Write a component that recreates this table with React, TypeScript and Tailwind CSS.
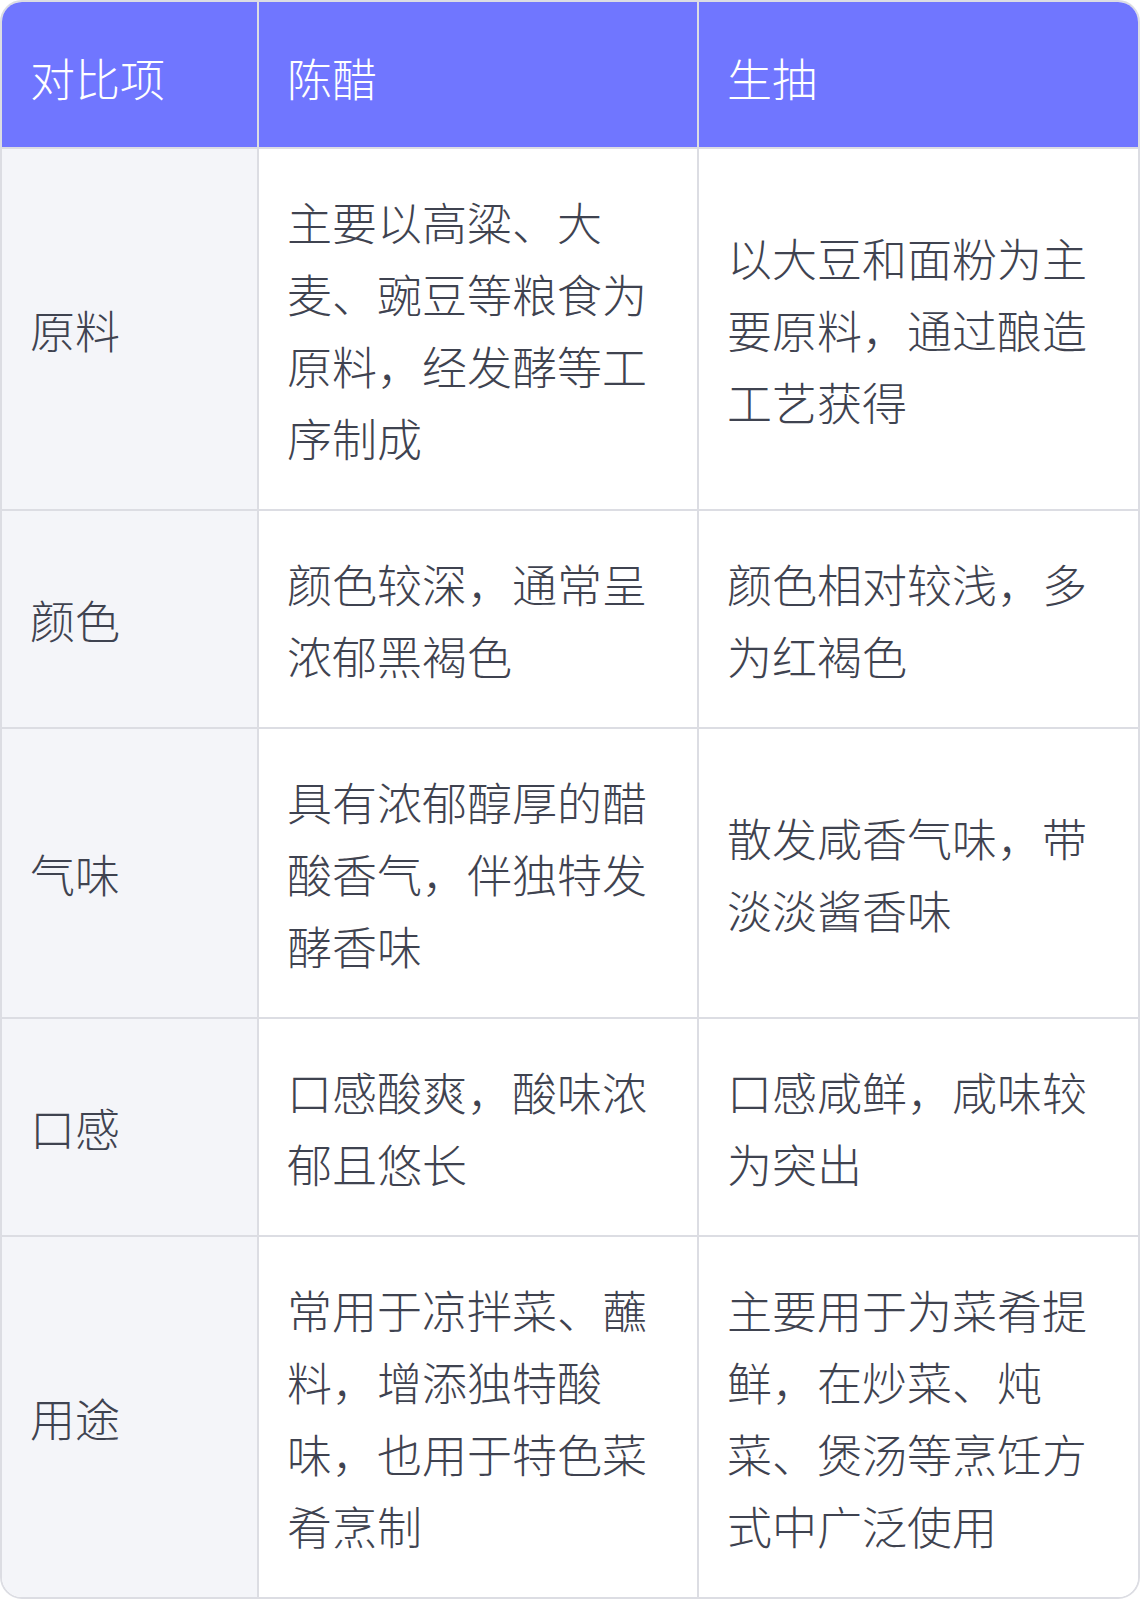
import React from 'react'

const rows = [
    ['原料', '主要以高粱、大麦、豌豆等粮食为原料，经发酵等工序制成', '以大豆和面粉为主要原料，通过酿造工艺获得'],
    ['颜色', '颜色较深，通常呈浓郁黑褐色', '颜色相对较浅，多为红褐色'],
    ['气味', '具有浓郁醇厚的醋酸香气，伴独特发酵香味', '散发咸香气味，带淡淡酱香味'],
    ['口感', '口感酸爽，酸味浓郁且悠长', '口感咸鲜，咸味较为突出'],
    ['用途', '常用于凉拌菜、蘸料，增添独特酸味，也用于特色菜肴烹制', '主要用于为菜肴提鲜，在炒菜、炖菜、煲汤等烹饪方式中广泛使用'],
]

function App() {
    return (
        <div className="w-[1140px] bg-white" style={{ fontFamily: '"Noto Sans CJK SC", "Noto Sans", sans-serif' }}>
            <div className="border-2 border-[#dcdde3] rounded-[22px] overflow-hidden">
                <div className="grid grid-cols-[257px_440px_1fr] text-[45px] leading-[72px] font-light">
                    {['对比项', '陈醋', '生抽'].map((h, i) => (
                        <div
                            key={h}
                            className={`bg-[#7076ff] text-white px-[28px] pt-[40px] pb-[33px] border-b-2 border-[#dcdde3] ${i < 2 ? 'border-r-2' : ''}`}
                        >
                            {h}
                        </div>
                    ))}
                    {rows.map((r, ri) =>
                        r.map((c, ci) => (
                            <div
                                key={ri + '-' + ci}
                                className={`flex items-center px-[28px] pt-[37px] pb-[35px] text-[#3f4350] border-[#dcdde3] ${ci === 0 ? 'bg-[#f4f5f9]' : 'bg-white'} ${ci < 2 ? 'border-r-2' : ''} ${ri < rows.length - 1 ? 'border-b-2' : ''}`}
                            >
                                <span>{c}</span>
                            </div>
                        ))
                    )}
                </div>
            </div>
        </div>
    )
}

export default App
